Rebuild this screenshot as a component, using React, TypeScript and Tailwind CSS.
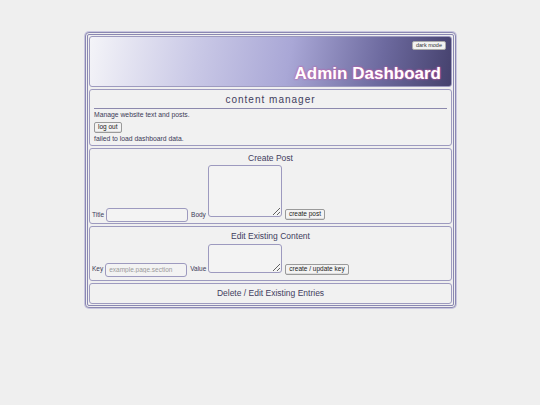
import React from 'react';

const font = { fontFamily: '"Liberation Sans", Arial, sans-serif' };

function Section({ children, className = '' }: { children: React.ReactNode; className?: string }) {
  return (
    <div className={`border border-[#9d9abf] rounded-[3px] bg-[#f1f1f1] ${className}`}>{children}</div>
  );
}

function SmallButton({ children, className = '' }: { children: React.ReactNode; className?: string }) {
  return (
    <button
      className={`h-[11px] px-[3px] text-[6.5px] leading-none text-[#222] bg-[#f3f3f3] border border-[#9a9a9a] rounded-[2px] shadow-[inset_0_-1px_0_#ddd] ${className}`}
    >
      {children}
    </button>
  );
}

export default function App() {
  return (
    <div className="w-[540px] h-[405px] bg-[#efefef] pt-[32px] flex justify-center" style={font}>
      <div className="w-[371px] h-[276px] ml-[1px] border-[3px] border-double border-[#8a87b2] rounded-[4px] p-[1px] flex flex-col gap-[2px] bg-[#efefef] shadow-[0_0_0_1px_#c9c7de]">
        {/* header */}
        <div className="relative h-[51px] border border-[#9d9abf] rounded-[3px] bg-[linear-gradient(100deg,#f4f4f8_0%,#c9c8e6_30%,#a9a7d6_55%,#6d6a9f_80%,#45416d_100%)]">
          <button className="absolute top-[4px] right-[5px] h-[9px] px-[3px] text-[5.5px] leading-none text-[#333] bg-[#f2f2f2] border border-[#aaa] rounded-[2px]">
            dark mode
          </button>
          <div className="absolute right-[10px] bottom-[4px] text-[17px] font-bold text-white leading-none [text-shadow:0_0_2px_#c75ba8,0_0_2px_#c75ba8]">
            Admin Dashboard
          </div>
        </div>

        {/* content manager */}
        <Section className="h-[57px] px-[4px] pt-[5px] flex flex-col items-start">
          <div className="self-stretch text-center text-[10px] tracking-[1px] text-[#3f3d5e] leading-none pb-[3px] border-b border-[#8c89ad]">
            content manager
          </div>
          <div className="text-[6.8px] text-[#3c3b58] leading-none mt-[3px]">Manage website text and posts.</div>
          <SmallButton className="mt-[3px]">log out</SmallButton>
          <div className="text-[6.8px] text-[#3c3b58] leading-none mt-[3px]">failed to load dashboard data.</div>
        </Section>

        {/* create post */}
        <Section className="h-[77px] px-[2px] pt-[5px]">
          <div className="text-center text-[8.5px] text-[#3f3d5e] leading-none">Create Post</div>
          <div className="flex items-end gap-[2px] mt-[3px] text-[6.5px] text-[#3c3b58]">
            <span className="leading-none mb-[4px]">Title</span>
            <input className="w-[82px] h-[14px] border border-[#9d9abf] rounded-[3px] bg-[#f3f3f3]" />
            <span className="leading-none mb-[4px] ml-[1px]">Body</span>
            <textarea className="w-[74px] h-[52px] mb-[5px] border border-[#9d9abf] rounded-[3px] bg-[#f3f3f3] resize" />
            <SmallButton className="mb-[2px] ml-[1px]">create post</SmallButton>
          </div>
        </Section>

        {/* edit existing */}
        <Section className="h-[55px] px-[2px] pt-[5px]">
          <div className="text-center text-[8.5px] text-[#3f3d5e] leading-none">Edit Existing Content</div>
          <div className="flex items-end gap-[2px] mt-[3px] text-[6.5px] text-[#3c3b58]">
            <span className="leading-none mb-[4px]">Key</span>
            <input
              placeholder="example.page.section"
              className="w-[82px] h-[14px] px-[3px] text-[6.5px] border border-[#9d9abf] rounded-[3px] bg-[#f3f3f3] placeholder:text-[#9a9a9a]"
            />
            <span className="leading-none mb-[4px] ml-[1px]">Value</span>
            <textarea className="w-[74px] h-[29px] mb-[4px] border border-[#9d9abf] rounded-[3px] bg-[#f3f3f3] resize" />
            <SmallButton className="mb-[2px] ml-[1px]">create / update key</SmallButton>
          </div>
        </Section>

        {/* delete / edit */}
        <Section className="h-[21px] flex items-center justify-center">
          <div className="text-[8.5px] text-[#3f3d5e] leading-none">Delete / Edit Existing Entries</div>
        </Section>
      </div>
    </div>
  );
}
